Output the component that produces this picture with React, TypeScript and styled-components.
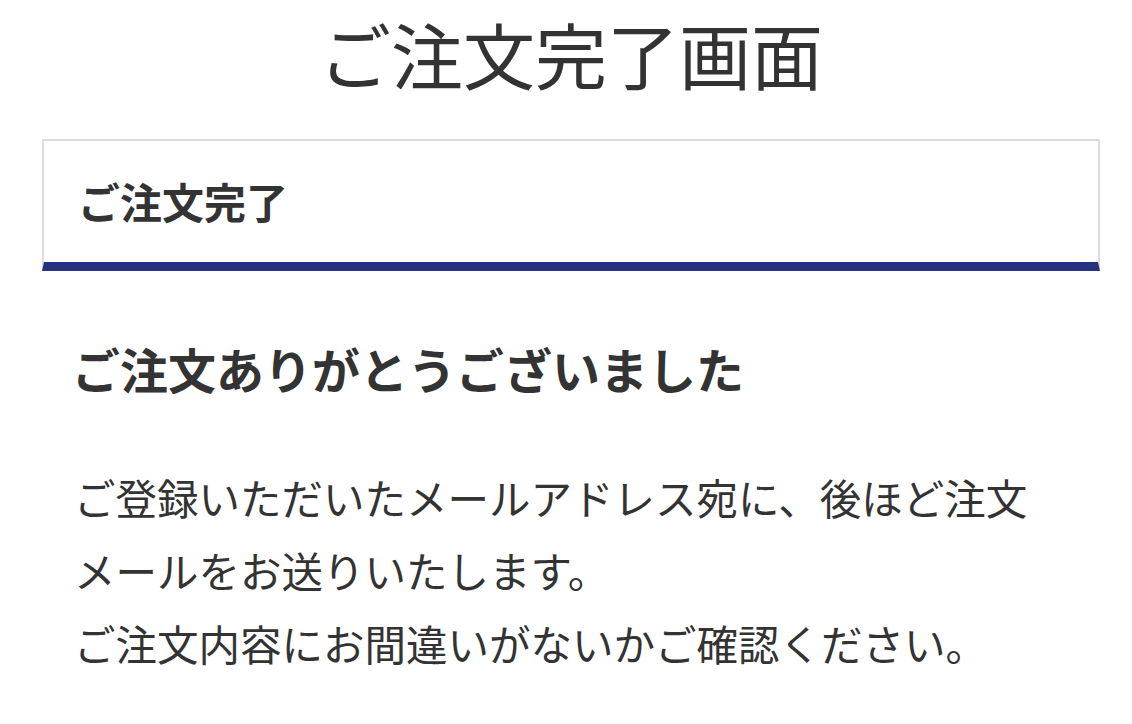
import * as React from "react";
import styled, {createGlobalStyle} from "styled-components";

const GlobalStyle = createGlobalStyle`
    body {
        margin: 0;
        background: #fff;
        color: #333;
        font-family: "Noto Sans CJK JP", "Noto Sans", sans-serif;
    }
`;

const Page = styled.div`
    padding: 17px 32px 0 42px;
`;

const Title = styled.h1`
    margin: 0;
    font-size: 72px;
    font-weight: 400;
    line-height: 72px;
    text-align: center;
`;

const Card = styled.section`
    margin-top: 50px;
    border: 2px solid #dddddd;
    border-bottom: 9px solid #25327f;
    padding: 39px 34px 40px;
`;

const CardTitle = styled.h2`
    margin: 0;
    font-size: 42px;
    font-weight: 700;
    line-height: 42px;
`;

const Body = styled.div`
    padding: 73px 32px 0;
`;

const Thanks = styled.h3`
    margin: 0 0 0 -2px;
    font-size: 48px;
    font-weight: 700;
    line-height: 48px;
`;

const Message = styled.p`
    margin: 69px 0 0;
    font-size: 41.5px;
    font-weight: 400;
    line-height: 73px;
`;

export default function App() {
    return <>
        <GlobalStyle/>
        <Page>
            <Title>ご注文完了画面</Title>
            <Card>
                <CardTitle>ご注文完了</CardTitle>
            </Card>
            <Body>
                <Thanks>ご注文ありがとうございました</Thanks>
                <Message>
                    ご登録いただいたメールアドレス宛に、後ほど注文<br/>
                    メールをお送りいたします。<br/>
                    ご注文内容にお間違いがないかご確認ください。
                </Message>
            </Body>
        </Page>
    </>;
}
